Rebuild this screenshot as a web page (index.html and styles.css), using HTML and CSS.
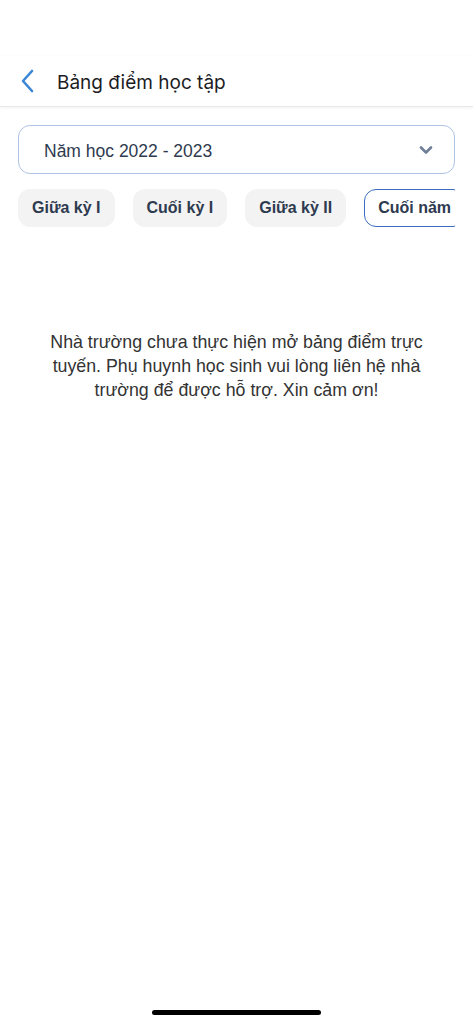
FILE: index.html
```html
<!DOCTYPE html>
<html lang="vi">

<head>
    <meta charset="UTF-8">
    <meta name="viewport" content="width=device-width, initial-scale=1.0">
    <title>Bảng điểm học tập</title>
    <link rel="stylesheet" href="styles.css">
</head>

<body>
    <div id="screen">
        <div class="status"></div>

        <div class="header">
            <button class="back">
                <svg width="16" height="24" viewBox="0 0 16 24">
                    <path d="M12 2 L3 12 L12 22" fill="none" stroke="#3b86d6" stroke-width="2.6" stroke-linecap="round" stroke-linejoin="round" />
                </svg>
            </button>
            <div class="title">Bảng điểm học tập</div>
        </div>

        <div class="content">
            <div class="select">
                <span>Năm học 2022 - 2023</span>
                <svg width="14" height="10" viewBox="0 0 14 10">
                    <path d="M2 2.5 L7 7.5 L12 2.5" fill="none" stroke="#6f7f99" stroke-width="2.6" stroke-linecap="round" stroke-linejoin="round" />
                </svg>
            </div>

            <div class="tabs">
                <div class="tab">Giữa kỳ I</div>
                <div class="tab">Cuối kỳ I</div>
                <div class="tab">Giữa kỳ II</div>
                <div class="tab active">Cuối năm</div>
            </div>

            <p class="empty">Nhà trường chưa thực hiện mở bảng điểm trực tuyến. Phụ huynh học sinh vui lòng liên hệ nhà trường để được hỗ trợ. Xin cảm ơn!</p>
        </div>

        <div class="home-bar"></div>
    </div>
</body>

</html>
```

FILE: styles.css
```css
* {
    box-sizing: border-box;
}

body {
    margin: 0;
    background: #fff;
    font-family: "Liberation Sans", Arial, sans-serif;
    color: #2b3446;
}

#screen {
    position: relative;
    width: 473px;
    height: 1024px;
    display: flex;
    flex-direction: column;
    overflow: hidden;
}

.status {
    height: 56px;
}

.header {
    display: flex;
    align-items: center;
    height: 51px;
    padding-left: 20px;
    border-bottom: 1px solid #e9e9e9;
    box-shadow: 0 1px 3px rgba(0, 0, 0, 0.06);
}

.back {
    display: flex;
    border: none;
    background: none;
    padding: 0;
    margin-right: 21px;
}

.title {
    font-family: "Inter", sans-serif;
    font-size: 19px;
    color: #1d1d1f;
    margin-top: 3px;
}

.content {
    padding: 18px 18px 0;
    flex: 1;
}

.select {
    display: flex;
    align-items: center;
    justify-content: space-between;
    height: 49px;
    padding: 3px 21px 0 25px;
    border: 1px solid #aec2e4;
    border-radius: 12px;
    font-size: 17.5px;
    color: #2e3a4f;
}

.select svg {
    margin-top: -2px;
}

.tabs {
    display: flex;
    gap: 18px;
    margin-top: 15px;
    overflow: hidden;
}

.tab {
    flex-shrink: 0;
    height: 38px;
    display: flex;
    align-items: center;
    padding: 0 13px;
    border-radius: 12px;
    border: 1px solid #f3f3f3;
    background: #f3f3f3;
    font-size: 16px;
    font-weight: bold;
    color: #2e3a4f;
}

.tab.active {
    background: #fff;
    border-color: #3a6cc0;
}

.empty {
    margin: 103px 20px 0;
    text-align: center;
    font-size: 17.8px;
    line-height: 24px;
    color: #333;
}

.home-bar {
    position: absolute;
    left: 152px;
    bottom: 9px;
    width: 169px;
    height: 5px;
    border-radius: 3px;
    background: #000;
}
```
